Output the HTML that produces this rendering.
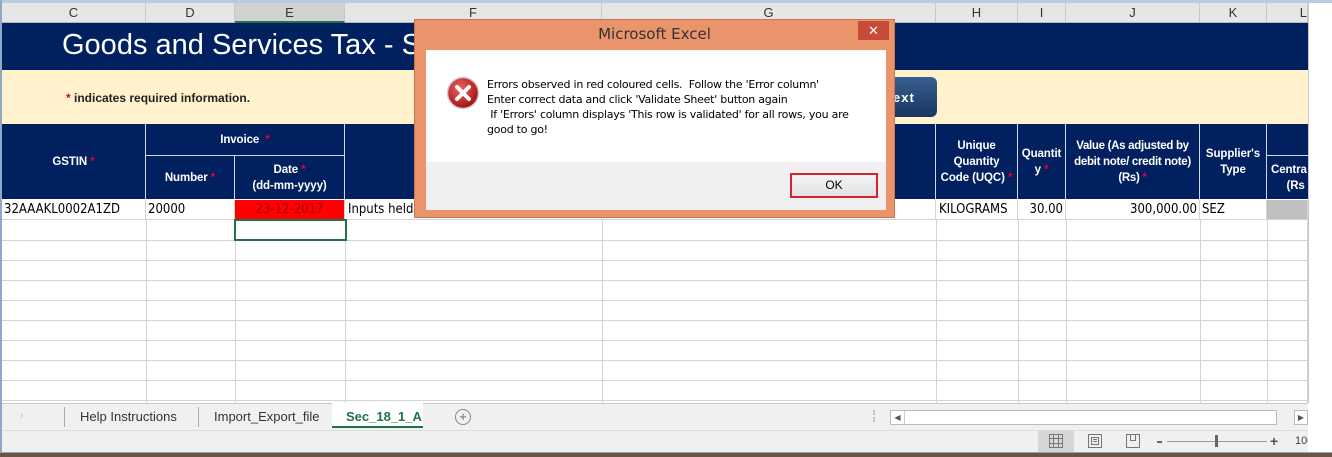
<!DOCTYPE html>
<html><head><meta charset="utf-8"><style>
*{margin:0;padding:0;box-sizing:border-box}
body{width:1332px;height:457px;overflow:hidden;background:#fff;font-family:"Liberation Sans",Arial,sans-serif;position:relative}
.a{position:absolute}
.ch{top:3px;height:20px;background:#e6e6e6;border-right:1px solid #c8c8c8;border-bottom:1px solid #b8b8b8;font-size:13px;color:#333;text-align:center;line-height:20px}
.hd{background:#002060;color:#fff;font-weight:bold;font-size:11.5px;text-align:center;display:flex;align-items:center;justify-content:center;border-right:1px solid #d0d8e8;line-height:16px;letter-spacing:-0.1px}
.st{color:#e0003c}
.vl{width:1px;background:#d4d4d4;top:220px;height:183px}
.hl{height:1px;background:#d4d4d4;left:2px;width:1306px}
.c{top:200px;height:20px;font-size:13px;line-height:20px;color:#000;font-family:"DejaVu Sans Condensed","Liberation Sans",sans-serif;border-right:1px solid #d4d4d4;border-bottom:1px solid #d4d4d4;white-space:nowrap;overflow:hidden}
</style></head><body>
<div class="a" style="left:0;top:0;width:1332px;height:3px;background:#b9cbe0"></div>
<div class="a" style="left:0;top:0;width:2px;height:457px;background:#8fa8c8"></div>
<div class="a ch" style="left:2px;width:144px">C</div>
<div class="a ch" style="left:146px;width:89px">D</div>
<div class="a ch" style="left:235px;width:110px;background:#d2d2d2;border-bottom:2px solid #217346">E</div>
<div class="a ch" style="left:345px;width:257px">F</div>
<div class="a ch" style="left:602px;width:334px">G</div>
<div class="a ch" style="left:936px;width:82px">H</div>
<div class="a ch" style="left:1018px;width:48px">I</div>
<div class="a ch" style="left:1066px;width:134px">J</div>
<div class="a ch" style="left:1200px;width:67px">K</div>
<div class="a ch" style="left:1267px;width:41px;text-align:right">L</div>
<div class="a" style="left:1308px;top:3px;width:24px;height:400px;background:#fff;border-left:1px solid #c8c8c8"></div>
<div class="a" style="left:2px;top:23px;width:1306px;height:47px;background:#002060"></div>
<div class="a" style="left:62px;top:29px;font-size:29px;color:#fff;white-space:nowrap">Goods and Services Tax - S</div>
<div class="a" style="left:2px;top:70px;width:1306px;height:54px;background:#fff2cc"></div>
<div class="a" style="left:66px;top:91px;font-size:12px;font-weight:bold;color:#222"><span class="st">*</span> indicates required information.</div>
<div class="a" style="left:870px;top:77px;width:67px;height:40px;background:linear-gradient(#3a5f90,#17365f);border-radius:0 6px 6px 0;color:#fff;font-weight:bold;font-size:13px;line-height:42px;padding-left:23px;letter-spacing:1px">ext</div>
<div class="a hd" style="left:2px;top:124px;width:144px;height:75px"><div>GSTIN <span class="st">*</span></div></div>
<div class="a hd" style="left:146px;top:124px;width:199px;height:32px;border-bottom:1px solid #d0d8e8"><div>Invoice &nbsp;<span class="st">*</span></div></div>
<div class="a hd" style="left:146px;top:156px;width:89px;height:43px"><div>Number <span class="st">*</span></div></div>
<div class="a hd" style="left:235px;top:156px;width:110px;height:43px"><div>Date <span class="st">*</span><br>(dd-mm-yyyy)</div></div>
<div class="a hd" style="left:345px;top:124px;width:591px;height:75px"></div>
<div class="a hd" style="left:936px;top:124px;width:82px;height:75px"><div>Unique<br>Quantity<br>Code (UQC) <span class="st">*</span></div></div>
<div class="a hd" style="left:1018px;top:124px;width:48px;height:75px"><div>Quantit<br>y <span class="st">*</span></div></div>
<div class="a hd" style="left:1066px;top:124px;width:134px;height:75px;letter-spacing:-0.3px"><div>Value (As adjusted by<br>debit note/ credit note)<br>(Rs) <span class="st">*</span></div></div>
<div class="a hd" style="left:1200px;top:124px;width:67px;height:75px"><div>Supplier's<br>Type</div></div>
<div class="a hd" style="left:1267px;top:124px;width:41px;height:32px;border-bottom:1px solid #d0d8e8;border-right:none"></div>
<div class="a hd" style="left:1267px;top:156px;width:41px;height:43px;border-right:none;justify-content:flex-start;padding-left:4px;text-align:left;white-space:nowrap;overflow:hidden"><div>Centra<br>&nbsp;&nbsp;&nbsp;&nbsp;&nbsp;(Rs</div></div>
<div class="a c" style="left:2px;width:144px;padding-left:2px">32AAAKL0002A1ZD</div>
<div class="a c" style="left:146px;width:89px;padding-left:2px">20000</div>
<div class="a c" style="left:235px;width:110px;background:#ff0000;color:#a00000;text-align:center">23-12-2017</div>
<div class="a c" style="left:345px;width:257px;padding-left:3px">Inputs held</div>
<div class="a c" style="left:602px;width:334px"></div>
<div class="a c" style="left:936px;width:82px;padding-left:3px">KILOGRAMS</div>
<div class="a c" style="left:1018px;width:48px;text-align:right;padding-right:2px">30.00</div>
<div class="a c" style="left:1066px;width:134px;text-align:right;padding-right:2px">300,000.00</div>
<div class="a c" style="left:1200px;width:67px;padding-left:2px">SEZ</div>
<div class="a c" style="left:1267px;width:41px;background:#c0c0c0"></div>
<div class="a vl" style="left:146px"></div><div class="a vl" style="left:235px"></div><div class="a vl" style="left:345px"></div><div class="a vl" style="left:602px"></div><div class="a vl" style="left:936px"></div><div class="a vl" style="left:1018px"></div><div class="a vl" style="left:1066px"></div><div class="a vl" style="left:1200px"></div><div class="a vl" style="left:1267px"></div><div class="a vl" style="left:1307px"></div>
<div class="a hl" style="top:240px"></div><div class="a hl" style="top:260px"></div><div class="a hl" style="top:280px"></div><div class="a hl" style="top:300px"></div><div class="a hl" style="top:320px"></div><div class="a hl" style="top:340px"></div><div class="a hl" style="top:360px"></div><div class="a hl" style="top:380px"></div><div class="a hl" style="top:400px"></div>
<div class="a" style="left:234px;top:219px;width:113px;height:22px;border:2px solid #217346"></div>
<div class="a" style="left:2px;top:403px;width:1306px;height:27px;background:#f0f0f0;border-top:1px solid #c8c8c8"></div>
<div class="a" style="left:20px;top:410px;font-size:10px;color:#bbb">›</div>
<div class="a" style="left:64px;top:407px;width:1px;height:20px;background:#aaa"></div>
<div class="a" style="left:80px;top:409px;font-size:13px;color:#333">Help Instructions</div>
<div class="a" style="left:198px;top:407px;width:1px;height:20px;background:#aaa"></div>
<div class="a" style="left:214px;top:409px;font-size:13px;color:#333">Import_Export_file</div>
<div class="a" style="left:332px;top:403px;width:91px;height:25px;background:#fff;border-bottom:2px solid #217346"></div>
<div class="a" style="left:346px;top:409px;font-size:13px;color:#217346;font-weight:bold">Sec_18_1_A</div>
<div class="a" style="left:455px;top:409px;width:16px;height:16px;border:1px solid #888;border-radius:50%;font-size:13px;line-height:13px;text-align:center;color:#666">+</div>
<div class="a" style="left:873px;top:410px;width:2px;height:12px;border-left:2px dotted #bbb"></div>
<div class="a" style="left:890px;top:410px;width:387px;height:15px;background:#fff;border:1px solid #bbb"></div>
<div class="a" style="left:891px;top:411px;width:14px;height:13px;border-right:1px solid #ccc;font-size:8px;text-align:center;line-height:13px;color:#555">◀</div>
<div class="a" style="left:1294px;top:410px;width:14px;height:15px;background:#fff;border:1px solid #bbb;font-size:8px;text-align:center;line-height:13px;color:#555">▶</div>
<div class="a" style="left:2px;top:430px;width:1306px;height:22px;background:#f0f0f0;border-top:1px solid #ddd"></div>
<div class="a" style="left:1038px;top:431px;width:36px;height:21px;background:#d6d6d6"></div>
<svg class="a" style="left:1049px;top:434px" width="14" height="14"><path d="M.5 .5h13v13H.5zM.5 4.5h13M.5 9.5h13M4.5 .5v13M9.5 .5v13" stroke="#777" fill="none"/></svg>
<svg class="a" style="left:1088px;top:434px" width="14" height="14"><path d="M.5 .5h13v13H.5zM3.5 3.5h7v7h-7zM5 5.5h4M5 7.5h4" stroke="#777" fill="none"/></svg>
<svg class="a" style="left:1126px;top:434px" width="14" height="14"><path d="M.5 .5h13v13H.5zM4.5 .5v6h5v-6" stroke="#777" fill="none"/></svg>
<div class="a" style="left:1157px;top:441px;width:5px;height:2px;background:#666"></div>
<div class="a" style="left:1167px;top:441px;width:100px;height:1px;background:#999"></div>
<div class="a" style="left:1215px;top:435px;width:3px;height:12px;background:#666"></div>
<div class="a" style="left:1270px;top:433px;font-size:14px;color:#555;font-weight:bold">+</div>
<div class="a" style="left:1295px;top:435px;font-size:11px;color:#444">100</div>
<div class="a" style="left:1308px;top:403px;width:24px;height:54px;background:#fff"></div>
<div class="a" style="left:0;top:452px;width:1332px;height:5px;background:#6e5448;border-top:1px solid #8aa"></div>
<div class="a" style="left:414px;top:19px;width:481px;height:199px;background:#e9946b;border:1px solid #c9764e"></div>
<div class="a" style="left:414px;top:25px;width:481px;text-align:center;font-size:15px;color:#333;font-family:'DejaVu Sans','Liberation Sans',sans-serif">Microsoft Excel</div>
<div class="a" style="left:858px;top:21px;width:31px;height:19px;background:#c84a3a;color:#fff;text-align:center;font-size:13px;line-height:19px">✕</div>
<div class="a" style="left:426px;top:50px;width:460px;height:112px;background:#fff"></div>
<div class="a" style="left:426px;top:162px;width:460px;height:48px;background:#f0f0f0"></div>
<svg class="a" style="left:446px;top:76px" width="34" height="34"><defs><radialGradient id="g" cx=".4" cy=".35" r=".7"><stop offset="0" stop-color="#f06060"/><stop offset="1" stop-color="#a00c0c"/></radialGradient></defs><circle cx="17" cy="17" r="15.5" fill="url(#g)" stroke="#ccc" stroke-width="1.5"/><path d="M11 11l12 12M23 11l-12 12" stroke="#fff" stroke-width="4" stroke-linecap="round"/></svg>
<div class="a" style="left:487px;top:77px;font-size:11px;line-height:15px;color:#000;font-family:'DejaVu Sans','Liberation Sans',sans-serif;letter-spacing:-0.25px;white-space:nowrap">Errors observed in red coloured cells.&nbsp; Follow the 'Error column'<br>Enter correct data and click 'Validate Sheet' button again<br>&nbsp;If 'Errors' column displays 'This row is validated' for all rows, you are<br>good to go!</div>
<div class="a" style="left:790px;top:173px;width:88px;height:25px;border:2px solid #d2232f;background:linear-gradient(#f4f4f4,#e2e2e2);text-align:center;font-size:12px;line-height:21px;color:#000">OK</div>
</body></html>
